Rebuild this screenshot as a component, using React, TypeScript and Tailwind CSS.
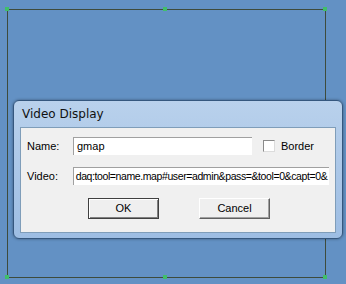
export default function App() {
  const handle = "absolute w-[4px] h-[4px] bg-[#3fbf6a]";
  return (
    <div className="relative w-[346px] h-[284px] overflow-hidden bg-[#6391c4] font-['Liberation_Sans',sans-serif] text-[11px] text-black">
      {/* canvas frame */}
      <div className="absolute left-[7px] top-[9px] w-[319px] h-[269px] border border-[#3e4b3c]" />
      <div className={`${handle} left-[5px] top-[7px]`} />
      <div className={`${handle} left-[163px] top-[7px]`} />
      <div className={`${handle} left-[323px] top-[7px]`} />
      <div className={`${handle} left-[5px] top-[275px]`} />
      <div className={`${handle} left-[163px] top-[275px]`} />
      <div className={`${handle} left-[323px] top-[275px]`} />

      {/* dialog window */}
      <div className="absolute left-[13px] top-[100px] w-[330px] h-[139px] rounded-[6px] border border-[#35577e] bg-gradient-to-b from-[#b9d1ec] to-[#9dbde3] shadow-[0_0_3px_rgba(0,0,0,0.4)] flex flex-col px-[6px] pb-[5px]">
        <div className="h-[26px] flex items-center pl-[2px] text-[12px] font-['DejaVu_Sans',sans-serif] text-[#111]">
          Video Display
        </div>
        <div className="flex-1 bg-[#f0f0f0] border border-[#7f9db9] flex flex-col pl-[6px] pr-[6px] pt-[9px]">
          <div className="flex items-center h-[18px]">
            <span className="w-[46px]">Name:</span>
            <div className="w-[179px] h-[18px] bg-white border-t border-l border-[#a0a0a0] border-b-white border-r-white flex items-center pl-[3px]">
              gmap
            </div>
            <div className="ml-[11px] w-[12px] h-[12px] bg-white border border-[#8a8a8a] border-b-[#dcdcdc] border-r-[#dcdcdc]" />
            <span className="ml-[6px]">Border</span>
          </div>
          <div className="flex items-center h-[18px] mt-[12px]">
            <span className="w-[46px]">Video:</span>
            <div className="w-[258px] h-[18px] bg-white border-t border-l border-[#a0a0a0] flex items-center pl-[2px] whitespace-nowrap overflow-hidden text-[10.5px] tracking-[-0.4px]">
              daq:tool=name.map#user=admin&amp;pass=&amp;tool=0&amp;capt=0&amp;
            </div>
          </div>
          <div className="flex mt-[13px] pl-[61px] gap-[40px]">
            <button className="w-[71px] h-[21px] bg-[#efefef] border border-[#404040] shadow-[inset_1px_1px_0_#fff,inset_-1px_-1px_0_#808080] flex items-center justify-center">
              OK
            </button>
            <button className="w-[71px] h-[21px] bg-[#efefef] border border-t-white border-l-white border-b-[#606060] border-r-[#606060] shadow-[inset_-1px_-1px_0_#a0a0a0] flex items-center justify-center">
              Cancel
            </button>
          </div>
        </div>
      </div>
    </div>
  );
}
